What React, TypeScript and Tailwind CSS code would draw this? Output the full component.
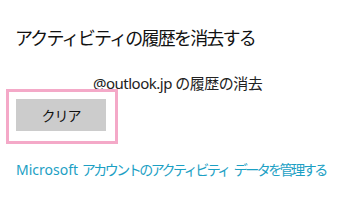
import React from "react";

export default function App() {
  const font = { fontFamily: '"Noto Sans", "Noto Sans CJK JP", sans-serif' };
  return (
    <div className="relative w-[351px] h-[203px] bg-white overflow-hidden text-[#1a1a1a]" style={font}>
      <div className="pl-[15px] pt-[25px] text-[18px] leading-[26px] tracking-[-1.8px] text-[#111] whitespace-nowrap">
        アクティビティの履歴を消去する
      </div>
      <div className="pl-[93px] mt-[22px] text-[15px] leading-[20px] tracking-[-0.5px] text-[#222] whitespace-nowrap">
        @outlook.jp の履歴の消去
      </div>
      <div className="pl-[16px] mt-[6px]">
        <button className="w-[90px] h-[32px] bg-[#cccccc] text-[14px] tracking-[-1px] text-[#111] flex items-center justify-center">
          クリア
        </button>
      </div>
      <div className="pl-[16px] mt-[29px] text-[14px] leading-[20px] text-[#1ca0c4] whitespace-nowrap">
        <span className="tracking-[0px]">Microsoft </span>
        <span className="tracking-[-2.5px]">アカウントのアクティビティ</span>
        <span className="tracking-[-2.5px] ml-[5px]">データを管理する</span>
      </div>
      <div className="absolute left-[6px] top-[89px] w-[112px] h-[55px] border-[3px] border-[#f4a9c8]" />
    </div>
  );
}
